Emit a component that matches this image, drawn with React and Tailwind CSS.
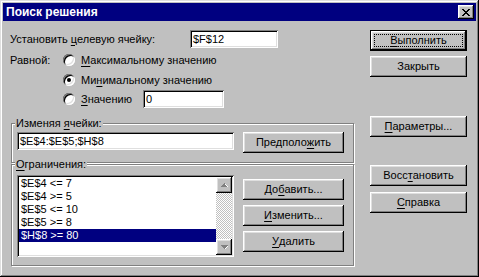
import React from "react";

// Win95 bevels
const raised =
  "shadow-[inset_-1px_-1px_#000,inset_1px_1px_#fff,inset_-2px_-2px_#808080,inset_2px_2px_#dfdfdf]";
const raisedDefault =
  "shadow-[inset_0_0_0_1px_#000,inset_-2px_-2px_#000,inset_2px_2px_#fff,inset_-3px_-3px_#808080,inset_3px_3px_#dfdfdf]";
const sunken =
  "shadow-[inset_1px_1px_#808080,inset_-1px_-1px_#fff,inset_2px_2px_#000,inset_-2px_-2px_#dfdfdf]";

const U = ({ children }) => <span className="underline underline-offset-[2px]">{children}</span>;

function Btn({ children, className = "", isDefault = false }) {
  return (
    <div
      className={`h-[21px] flex items-center justify-center bg-[#c0c0c0] ${isDefault ? raisedDefault : raised} ${className}`}
    >
      {isDefault ? (
        <div className="w-[calc(100%-8px)] h-[13px] border border-dotted border-black flex items-center justify-center">
          {children}
        </div>
      ) : (
        children
      )}
    </div>
  );
}

function Input({ value, className = "" }) {
  return (
    <div className={`h-[18px] bg-white flex items-center pl-[3px] ${sunken} ${className}`}>
      {value}
    </div>
  );
}

function Radio({ checked }) {
  return (
    <div
      className={`w-[12px] h-[12px] shrink-0 rounded-full bg-white flex items-center justify-center shadow-[inset_1px_1px_#808080,inset_-1px_-1px_#fff,inset_2px_2px_#000,inset_-2px_-2px_#dfdfdf]`}
    >
      {checked && <div className="w-[4px] h-[4px] rounded-full bg-black" />}
    </div>
  );
}

function Group({ label, className = "", children }) {
  return (
    <div
      className={`relative ml-[1px] w-[343px] border border-[#808080] shadow-[1px_1px_0_#fff,inset_1px_1px_0_#fff] ${className}`}
    >
      <div className="absolute left-[3px] top-[-7px] bg-[#c0c0c0] px-[1px] h-[13px] flex items-center">
        {label}
      </div>
      {children}
    </div>
  );
}

const CloseIcon = () => (
  <svg width="8" height="7" viewBox="0 0 8 7" shapeRendering="crispEdges">
    <path
      fill="#000"
      d="M0 0h2v1H0zM6 0h2v1H6zM1 1h2v1H1zM5 1h2v1H5zM2 2h4v1H2zM3 3h2v1H3zM2 4h4v1H2zM1 5h2v1H1zM5 5h2v1H5zM0 6h2v1H0zM6 6h2v1H6z"
    />
  </svg>
);

const constraints = ["$E$4 <= 7", "$E$4 >= 5", "$E$5 <= 10", "$E$5 >= 8", "$H$8 >= 80"];

export default function App() {
  return (
    <div className="w-[479px] h-[277px] bg-[#c0c0c0] p-[3px] flex flex-col text-[11px] leading-none text-black font-['Liberation_Sans',Arial,sans-serif] shadow-[inset_-1px_-1px_#000,inset_1px_1px_#dfdfdf,inset_-2px_-2px_#808080,inset_2px_2px_#fff]">
      {/* title bar */}
      <div className="h-[18px] bg-[#000080] flex items-center justify-between pl-[3px] pr-[2px]">
        <span className="text-white font-bold text-[12px]">Поиск решения</span>
        <div className={`w-[16px] h-[14px] bg-[#c0c0c0] flex items-center justify-center ${raised}`}>
          <CloseIcon />
        </div>
      </div>

      <div className="flex flex-1">
        {/* left column */}
        <div className="ml-[7px] w-[345px] flex flex-col">
          <div className="mt-[9px] h-[18px] flex items-center">
            <span className="w-[180px]">
              Установить <U>ц</U>елевую ячейку:
            </span>
            <Input value="$F$12" className="w-[88px]" />
          </div>

          <div className="mt-[2px] flex">
            <span className="w-[53px] h-[20px] flex items-center">Равной:</span>
            <div className="flex flex-col">
              <div className="h-[20px] flex items-center gap-[6px]">
                <Radio />
                <span>
                  <U>М</U>аксимальному значению
                </span>
              </div>
              <div className="h-[20px] flex items-center gap-[6px]">
                <Radio checked />
                <span>
                  Ми<U>н</U>имальному значению
                </span>
              </div>
              <div className="h-[18px] flex items-center gap-[6px]">
                <Radio />
                <span className="w-[56px]">
                  <U>З</U>начению
                </span>
                <Input value="0" className="w-[81px]" />
              </div>
            </div>
          </div>

          <Group
            className="mt-[15px] h-[40px]"
            label={
              <span>
                Изменяя <U>я</U>чейки:
              </span>
            }
          >
            <div className="pt-[8px] pl-[5px] flex">
              <Input value="$E$4:$E$5;$H$8" className="w-[217px]" />
              <Btn className="ml-[9px] w-[101px]">
                Предполо<U>ж</U>ить
              </Btn>
            </div>
          </Group>

          <Group
            className="mt-[1px] h-[102px]"
            label={
              <span>
                <U>О</U>граничения:
              </span>
            }
          >
            <div className="pt-[10px] pl-[5px] flex">
              <div className={`w-[217px] h-[82px] bg-white p-[2px] flex ${sunken}`}>
                <div className="flex-1 flex flex-col">
                  {constraints.map((c, i) => (
                    <div
                      key={c}
                      className={`h-[13px] flex items-center pl-[2px] ${i === 4 ? "bg-[#000080] text-white" : ""}`}
                    >
                      {c}
                    </div>
                  ))}
                </div>
                <div className="w-[16px] flex flex-col bg-[repeating-conic-gradient(#c0c0c0_0_25%,#fff_0_50%)] bg-[length:2px_2px]">
                  <div className={`h-[16px] bg-[#c0c0c0] flex items-center justify-center ${raised}`}>
                    <svg width="7" height="4" viewBox="0 0 7 4" shapeRendering="crispEdges">
                      <path fill="#fff" d="M4 1h1v1H4zM5 2h1v1H5zM6 3h1v1H6z" />
                      <path fill="#808080" d="M3 0h1v1H3zM2 1h2v1H2zM1 2h4v1H1zM0 3h6v1H0z" />
                    </svg>
                  </div>
                  <div className="flex-1" />
                  <div className={`h-[16px] bg-[#c0c0c0] flex items-center justify-center ${raised}`}>
                    <svg width="7" height="4" viewBox="0 0 7 4" shapeRendering="crispEdges">
                      <path fill="#808080" d="M0 0h7v1H0zM1 1h5v1H1zM2 2h3v1H2zM3 3h1v1H3z" />
                      <path fill="#fff" d="M6 1h1v1H6zM5 2h1v1H5zM4 3h1v1H4z" />
                    </svg>
                  </div>
                </div>
              </div>
              <div className="ml-[9px] mt-[4px] flex flex-col gap-[5px]">
                <Btn className="w-[101px]">
                  До<U>б</U>авить...
                </Btn>
                <Btn className="w-[101px]">
                  <U>И</U>зменить...
                </Btn>
                <Btn className="w-[101px]">
                  <U>У</U>далить
                </Btn>
              </div>
            </div>
          </Group>
        </div>

        {/* right column */}
        <div className="ml-[15px] w-[97px] flex flex-col">
          <Btn isDefault className="mt-[9px]">
            <U>В</U>ыполнить
          </Btn>
          <Btn className="mt-[5px]">Закрыть</Btn>
          <Btn className="mt-[39px]">
            <U>П</U>араметры...
          </Btn>
          <Btn className="mt-[28px]">
            Восс<U>т</U>ановить
          </Btn>
          <Btn className="mt-[6px]">
            <U>С</U>правка
          </Btn>
        </div>
      </div>
    </div>
  );
}
